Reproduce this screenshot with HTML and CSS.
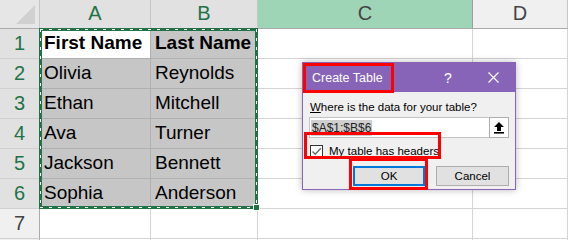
FILE: index.html
```html
<!DOCTYPE html>
<html>
<head>
<meta charset="utf-8">
<link rel="stylesheet" href="styles.css">
</head>
<body>
<div class="sheet">
  <div class="grid">
    <div class="corner"><span class="tri"></span></div>
    <div class="ch sel">A</div>
    <div class="ch sel">B</div>
    <div class="ch hl">C</div>
    <div class="ch">D</div>

    <div class="rh sel">1</div><div class="cell active b">First Name</div><div class="cell in b">Last Name</div><div class="cell"></div><div class="cell"></div>
    <div class="rh sel">2</div><div class="cell in">Olivia</div><div class="cell in">Reynolds</div><div class="cell"></div><div class="cell"></div>
    <div class="rh sel">3</div><div class="cell in">Ethan</div><div class="cell in">Mitchell</div><div class="cell"></div><div class="cell"></div>
    <div class="rh sel">4</div><div class="cell in">Ava</div><div class="cell in">Turner</div><div class="cell"></div><div class="cell"></div>
    <div class="rh sel">5</div><div class="cell in">Jackson</div><div class="cell in">Bennett</div><div class="cell"></div><div class="cell"></div>
    <div class="rh sel">6</div><div class="cell in">Sophia</div><div class="cell in">Anderson</div><div class="cell"></div><div class="cell"></div>
    <div class="rh">7</div><div class="cell"></div><div class="cell"></div><div class="cell"></div><div class="cell"></div>
    <div class="rh"></div><div class="cell"></div><div class="cell"></div><div class="cell"></div><div class="cell"></div>
  </div>

  <div class="selection"><span class="handle"></span></div>

  <div class="dialog">
    <div class="titlebar">
      <span class="title">Create Table</span>
      <span class="ctrl help">?</span>
      <span class="ctrl close">
        <svg width="11" height="11" viewBox="0 0 11 11"><path d="M0.5 0.5 L10.5 10.5 M10.5 0.5 L0.5 10.5" stroke="#fff" stroke-width="1.2" fill="none"/></svg>
      </span>
    </div>
    <div class="body">
      <div class="label"><u>W</u>here is the data for your table?</div>
      <div class="input">
        <span class="range"><span class="hi">$A$1:$B$6</span></span>
        <span class="pick">
          <svg width="12" height="13" viewBox="0 0 12 13"><path d="M6 1 L11 6 L8 6 L8 10 L4 10 L4 6 L1 6 Z" fill="#000"/><rect x="1" y="11" width="10" height="1.6" fill="#000"/></svg>
        </span>
      </div>
      <div class="check">
        <span class="box">
          <svg width="11" height="11" viewBox="0 0 11 11"><path d="M1.5 5.5 L4.2 8.3 L9.8 2.2" stroke="#666" stroke-width="1.3" fill="none"/></svg>
        </span>
        <span class="ctext"><u>M</u>y table has headers</span>
      </div>
      <div class="buttons">
        <span class="btn ok">OK</span>
        <span class="btn">Cancel</span>
      </div>
    </div>
    <span class="mark m-title"></span>
    <span class="mark m-check"></span>
    <span class="mark m-ok"></span>
  </div>
</div>
</body>
</html>
```

FILE: styles.css
```css
html, body {
  margin: 0;
  padding: 0;
  background: #fff;
}
.sheet {
  position: relative;
  width: 568px;
  height: 240px;
  overflow: hidden;
  font-family: "Liberation Sans", Arial, sans-serif;
}
.grid {
  display: grid;
  grid-template-columns: 40px 111px 107px 215px 95px;
  grid-template-rows: 29px repeat(8, 30px);
}
.grid > div {
  box-sizing: border-box;
}
.corner {
  position: relative;
  background: #e6e6e6;
  border-right: 1px solid #c6c6c6;
  border-bottom: 1px solid #ababab;
}
.tri {
  position: absolute;
  right: 4px;
  bottom: 4px;
  width: 0;
  height: 0;
  border-left: 19px solid transparent;
  border-bottom: 19px solid #d0d0d0;
}
.ch {
  display: flex;
  justify-content: center;
  align-items: flex-end;
  padding-bottom: 6px;
  font-size: 20px;
  line-height: 18px;
  color: #444;
  background: #f0f0f0;
  border-right: 1px solid #c6c6c6;
  border-bottom: 1px solid #ababab;
}
.ch.sel {
  background: #e1e1e1;
  color: #217346;
}
.ch.hl {
  background: #9fd5b7;
  color: #444;
  border-right-color: #9e9e9e;
}
.rh {
  display: flex;
  justify-content: center;
  align-items: flex-end;
  padding-bottom: 6px;
  font-size: 20px;
  line-height: 18px;
  color: #444;
  background: #f0f0f0;
  border-right: 1px solid #ababab;
  border-bottom: 1px solid #d0d0d0;
}
.rh.sel {
  background: #e1e1e1;
  color: #217346;
}
.cell {
  font-size: 19px;
  line-height: 18px;
  padding: 0 0 6px 4px;
  display: flex;
  align-items: flex-end;
  white-space: nowrap;
  color: #000;
  border-right: 1px solid #d4d4d4;
  border-bottom: 1px solid #d4d4d4;
}
.cell.in {
  background: #c6c6c6;
  border-right-color: #b0b0b0;
  border-bottom-color: #b0b0b0;
}
.cell.active {
  background: #fff;
  border-right-color: #b0b0b0;
  border-bottom-color: #b0b0b0;
}
.cell.b {
  font-weight: bold;
}

/* marching-ants selection */
.selection {
  position: absolute;
  left: 39px;
  top: 28px;
  width: 219px;
  height: 181px;
  box-sizing: border-box;
  border: 3px solid #217346;
}
.selection::before {
  content: "";
  position: absolute;
  left: -2px;
  top: -2px;
  right: -2px;
  bottom: -2px;
  background:
    repeating-linear-gradient(90deg, #fff 0 3px, transparent 3px 9px) left top / 100% 1px no-repeat,
    repeating-linear-gradient(90deg, #fff 0 3px, transparent 3px 9px) left bottom / 100% 1px no-repeat,
    repeating-linear-gradient(180deg, #fff 0 3px, transparent 3px 9px) left top / 1px 100% no-repeat,
    repeating-linear-gradient(180deg, #fff 0 3px, transparent 3px 9px) right top / 1px 100% no-repeat;
}
.handle {
  position: absolute;
  right: -5px;
  bottom: -5px;
  width: 5px;
  height: 5px;
  background: #217346;
  border: 1px solid #fff;
}

/* dialog */
.dialog {
  position: absolute;
  left: 302px;
  top: 62px;
  width: 214px;
  height: 128px;
  box-sizing: border-box;
  border: 1px solid #8764b8;
  background: #f0f0f0;
  box-shadow: 0 0 7px rgba(0, 0, 0, 0.28);
  display: flex;
  flex-direction: column;
  font-size: 11.5px;
  color: #000;
}
.titlebar {
  height: 29px;
  background: #8764b8;
  color: #fff;
  display: flex;
  align-items: center;
  padding: 0 7px 0 9px;
}
.title {
  font-size: 12.5px;
  flex: 1;
}
.ctrl {
  width: 30px;
  height: 29px;
  display: flex;
  align-items: center;
  justify-content: center;
  font-size: 14px;
}
.ctrl.close {
  margin-left: 15px;
}
.body {
  padding: 8px 6px 0 6px;
  display: flex;
  flex-direction: column;
}
.label {
  line-height: 14px;
  margin-left: 1px;
  white-space: nowrap;
}
.label u, .ctext u {
  text-decoration-thickness: 1px;
  text-underline-offset: 1px;
}
.input {
  margin-top: 3px;
  height: 21px;
  box-sizing: border-box;
  border: 1px solid #c4c4c4;
  background: #fff;
  display: flex;
  align-items: stretch;
}
.range {
  flex: 1;
  display: flex;
  align-items: center;
  padding-left: 1px;
  font-size: 12px;
}
.hi {
  background: #cfcfcf;
  padding: 1px 1px;
  line-height: 14px;
  color: #222;
}
.pick {
  width: 20px;
  box-sizing: border-box;
  border: 1px solid #adadad;
  margin: -1px -1px -1px 0;
  background: #fdfdfd;
  display: flex;
  align-items: center;
  justify-content: center;
}
.check {
  margin-top: 4px;
  height: 18px;
  display: flex;
  align-items: center;
  padding-left: 1px;
}
.box {
  width: 13px;
  height: 13px;
  box-sizing: border-box;
  border: 1px solid #333;
  background: #fff;
  display: flex;
  align-items: center;
  justify-content: center;
}
.ctext {
  margin-left: 6px;
  white-space: nowrap;
}
.buttons {
  margin-top: 6px;
  display: flex;
  justify-content: flex-end;
  gap: 11px;
}
.btn {
  width: 73px;
  height: 20px;
  box-sizing: border-box;
  border: 1px solid #adadad;
  background: #e1e1e1;
  display: flex;
  align-items: center;
  justify-content: center;
}
.btn.ok {
  width: 72px;
  border: 2px solid #0078d7;
}

/* red annotation boxes */
.mark {
  position: absolute;
  box-sizing: border-box;
  border: 3px solid #ff0000;
}
.m-title {
  left: 0;
  top: 0;
  width: 91px;
  height: 30px;
}
.m-check {
  left: 1px;
  top: 69px;
  width: 137px;
  height: 27px;
}
.m-ok {
  left: 46px;
  top: 95px;
  width: 79px;
  height: 32px;
}
```
